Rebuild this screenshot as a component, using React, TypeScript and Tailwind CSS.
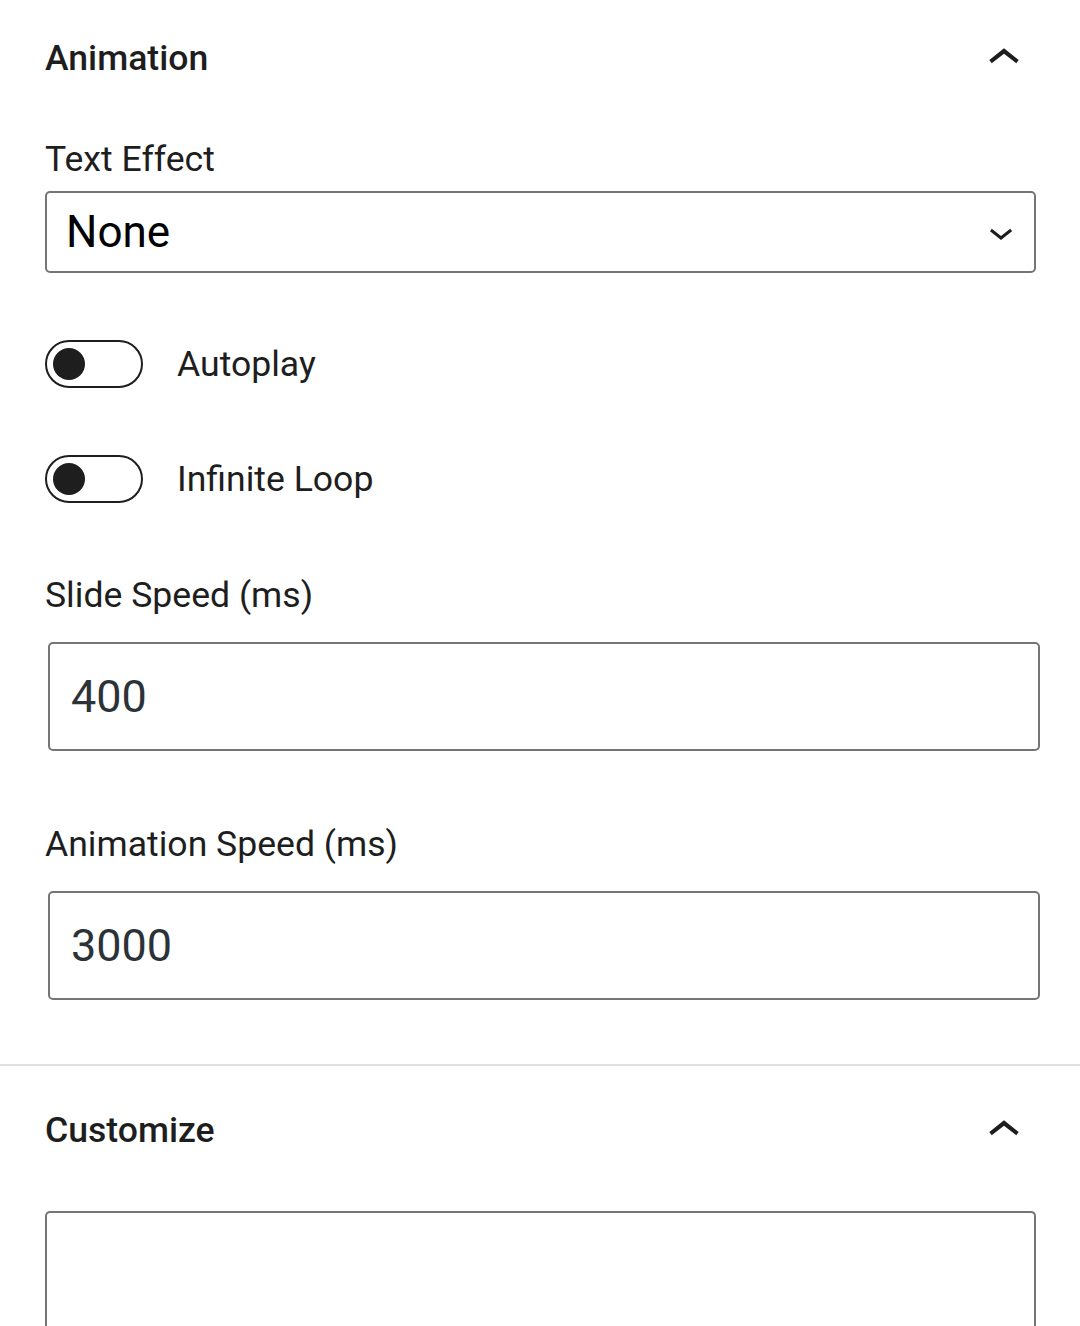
import { useState } from 'react'

function ChevronUp() {
  return (
    <svg viewBox="0 0 24 24" className="h-[64px] w-[64px] fill-[#1e1e1e]" aria-hidden>
      <path d="M6.5 12.4L12 8l5.5 4.4-.9 1.2L12 10l-4.6 3.6-.9-1.2z" />
    </svg>
  )
}

function ChevronDown() {
  return (
    <svg viewBox="0 0 24 24" className="h-[48px] w-[48px] fill-[#1e1e1e]" aria-hidden>
      <path d="M17.5 11.6L12 16l-5.5-4.4.9-1.2L12 14l4.6-3.6 1 1.2z" />
    </svg>
  )
}

function PanelHeader({ title }: { title: string }) {
  return (
    <div className="flex h-[64px] items-center justify-between">
      <h2 className="text-[35.6px] font-medium leading-none text-[#1e1e1e]">{title}</h2>
      <ChevronUp />
    </div>
  )
}

function Toggle({ label }: { label: string }) {
  const [on, setOn] = useState(false)
  return (
    <label className="flex items-center gap-[34px]">
      <button
        type="button"
        onClick={() => setOn(!on)}
        className={
          'flex h-[48px] w-[98px] items-center rounded-full border-2 border-[#1e1e1e] px-[6px] ' +
          (on ? 'justify-end bg-[#1e1e1e]' : 'justify-start bg-white')
        }
      >
        <span className={'h-[32px] w-[32px] rounded-full ' + (on ? 'bg-white' : 'bg-[#1e1e1e]')} />
      </button>
      <span className="text-[35.6px] leading-[42px] text-[#1e1e1e]">{label}</span>
    </label>
  )
}

function NumberField({ label, value }: { label: string; value: string }) {
  return (
    <div>
      <p className="text-[35.6px] leading-[42px] text-[#1e1e1e]">{label}</p>
      <div className="ml-[3px] mt-[26px] flex h-[109px] w-[992px] items-center rounded-[5px] border-2 border-[#757575] pl-[21px]">
        <span className="text-[45px] text-[#2c3338]">{value}</span>
      </div>
    </div>
  )
}

export default function App() {
  return (
    <div className="w-[1080px] bg-white font-['Roboto',sans-serif]">
      <section className="pl-[45px] pr-[44px] pt-[27px] pb-[64px]">
        <PanelHeader title="Animation" />

        <p className="mt-[47px] text-[35.6px] leading-[42px] text-[#1e1e1e]">Text Effect</p>
        <div className="relative mt-[11px] flex h-[82px] items-center rounded-[5px] border-2 border-[#757575] pl-[19px]">
          <span className="text-[44px] text-black">None</span>
          <span className="absolute right-[9px] top-1/2 -translate-y-1/2">
            <ChevronDown />
          </span>
        </div>

        <div className="mt-[67px] flex flex-col gap-[67px]">
          <Toggle label="Autoplay" />
          <Toggle label="Infinite Loop" />
        </div>

        <div className="mt-[71px]">
          <NumberField label="Slide Speed (ms)" value="400" />
        </div>
        <div className="mt-[71px] pt-px">
          <NumberField label="Animation Speed (ms)" value="3000" />
        </div>
      </section>

      <section className="border-t-2 border-[#e0e0e0] pl-[45px] pr-[44px] pt-[33px]">
        <PanelHeader title="Customize" />
        <div className="mt-[48px] h-[200px] rounded-t-[5px] border-2 border-b-0 border-[#757575]" />
      </section>
    </div>
  )
}
